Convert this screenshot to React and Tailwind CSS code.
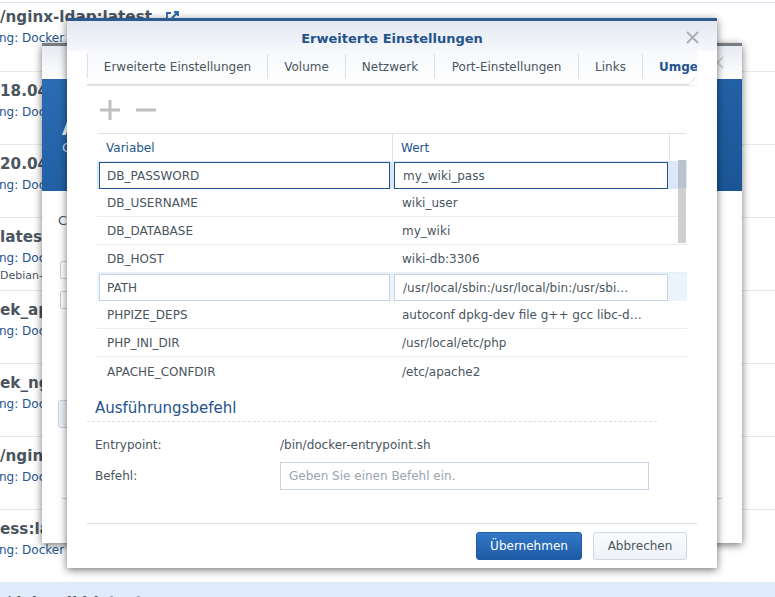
import React from 'react'

const FONT = 'font-["DejaVu_Sans",Verdana,sans-serif]'

const BG_ROWS = [
  { h: 'h-[69px]', pt: 'pt-[4px]', title: '/nginx-ldap:latest', link: true },
  { title: '18.04' },
  { title: '20.04' },
  { title: 'latest', extra: 'Debian-' },
  { title: 'ek_api' },
  { title: 'ek_nginx' },
  { title: '/nginx' },
  { title: 'ess:latest' },
]

const TABS = [
  { label: 'Erweiterte Einstellungen', w: 'w-[180px]' },
  { label: 'Volume', w: 'w-[78px]' },
  { label: 'Netzwerk', w: 'w-[89px]' },
  { label: 'Port-Einstellungen', w: 'w-[144px]' },
  { label: 'Links', w: 'w-[64px]' },
]

const VARS = [
  { k: 'DB_PASSWORD', v: 'my_wiki_pass', state: 'focus' },
  { k: 'DB_USERNAME', v: 'wiki_user' },
  { k: 'DB_DATABASE', v: 'my_wiki' },
  { k: 'DB_HOST', v: 'wiki-db:3306' },
  { k: 'PATH', v: '/usr/local/sbin:/usr/local/bin:/usr/sbin:/usr/bin', state: 'hover' },
  { k: 'PHPIZE_DEPS', v: 'autoconf dpkg-dev file g++ gcc libc-dev make' },
  { k: 'PHP_INI_DIR', v: '/usr/local/etc/php' },
  { k: 'APACHE_CONFDIR', v: '/etc/apache2', last: true },
]

function BgRow({ row }) {
  return (
    <div className={`${row.h || 'h-[73px]'} ${row.pt || 'pt-[9px]'} border-b border-[#e3e9f1]`}>
      <div className="flex items-center gap-2 text-[15.2px] leading-5 font-bold text-[#4a5560] whitespace-nowrap">
        {row.title}
        {row.link && (
          <svg width="13" height="12" viewBox="0 0 13 12" fill="none" stroke="#2b67ad" strokeWidth="1.8" className="ml-[6px]">
            <path d="M5 2H1v9h9V8M6 7l6-6M8 1h4v4" />
          </svg>
        )}
      </div>
      <div className="ml-[-1px] mt-[1px] text-xs leading-5 text-[#24548f] whitespace-nowrap">ng: Docker Hub</div>
      {row.extra && <div className="text-[11px] leading-4 text-[#4a5560]">{row.extra}</div>}
    </div>
  )
}

function VarRow({ row }) {
  const focus = row.state === 'focus'
  const hover = row.state === 'hover'
  const box = focus ? 'border-[#23538e]' : 'border-[#c5d3e2]'
  if (focus || hover) {
    return (
      <div className={`flex h-7 items-center pl-0.5 ${focus ? 'bg-[#dce8f8]' : 'bg-[#ebf3fd]'}`}>
        <div className={`flex h-[27px] w-[291px] shrink-0 items-center border bg-white pl-[7px] pt-px ${box}`}>{row.k}</div>
        <div className={`ml-[4px] flex h-[27px] w-[274px] shrink-0 items-center border bg-white pl-2 pr-[34px] pt-px ${box}`}>
          <span className="truncate">{row.v}</span>
        </div>
      </div>
    )
  }
  return (
    <div className={`flex h-7 items-center pt-px ${row.last ? '' : 'border-b border-[#e9eef4]'}`}>
      <div className="w-[296px] shrink-0 pl-2.5">{row.k}</div>
      <div className="w-[274px] shrink-0 truncate pl-[9px] pr-[22px]">{row.v}</div>
    </div>
  )
}

export default function App() {
  return (
    <div className={`relative h-[597px] w-[775px] overflow-hidden bg-white ${FONT}`}>
      {/* list behind the dialogs */}
      <div className="mt-[2px] border-t border-[#dbe4f0]">
        {BG_ROWS.map((row, i) => <BgRow key={i} row={row} />)}
      </div>
      <div className="h-[15px] bg-[#dfeafa] pl-[5px] pt-[10px] text-[15.2px] font-bold leading-5 text-[#4a5560]">/dokuwiki:latest</div>

      {/* back dialog */}
      <div className="absolute left-[42px] top-[43px] flex h-[500px] w-[700px] flex-col bg-white shadow-[0_2px_8px_rgba(0,0,0,0.55)]">
        <div className="h-[3px] bg-[#767c82]" />
        <div className="relative h-[33px] bg-gradient-to-b from-[#e6ebf1] to-white">
          <span className="absolute right-[18px] top-[10px] text-[#c6cbd1]">
            <svg width="13" height="13" viewBox="0 0 13 13" stroke="currentColor" strokeWidth="1.6"><path d="M1 1l11 11M12 1L1 12" /></svg>
          </span>
        </div>
        <div className="h-[112px] bg-gradient-to-br from-[#2a6cb4] to-[#1b5596] pl-[20px] pt-[40px] text-white">
          <div className="text-[18px] font-bold leading-5">A</div>
          <div className="mt-[1px] text-[13px] leading-4 text-[#cfe0f3]">C</div>
        </div>
        <div className="pl-4 pt-[22px] text-[13px] leading-4 text-[#4a5560]">C</div>
        <div className="ml-[18px] mt-[32px] h-[18px] w-[30px] rounded-[2px] border border-[#c5d3e2]" />
        <div className="ml-[18px] mt-3 h-[18px] w-[30px] rounded-[2px] border border-[#c5d3e2]" />
        <div className="ml-4 mt-[91px] h-7 w-[40px] rounded-[3px] border border-[#c5d3e2] bg-[#eef2f7]" />
        <div className="ml-5 mt-[70px] h-px w-[660px] bg-[#cdd2d8]" />
      </div>

      {/* front dialog */}
      <div className="absolute left-[67px] top-[18px] flex h-[550px] w-[650px] flex-col bg-white text-xs text-[#4a5560] shadow-[0_2px_8px_rgba(0,0,0,0.55)]">
        <div className="h-[3px] bg-[#2c5b94]" />
        <div className="relative h-[30px] bg-gradient-to-b from-[#e2e8f1] to-[#f6f8fb] text-center">
          <span className="text-[13px] font-bold leading-[36px] text-[#24538e]">Erweiterte Einstellungen</span>
          <span className="absolute right-[18px] top-[10px] text-[#a9aeb4]">
            <svg width="13" height="13" viewBox="0 0 13 13" stroke="currentColor" strokeWidth="1.8"><path d="M1 1l11 11M12 1L1 12" /></svg>
          </span>
        </div>

        {/* tabs */}
        <div className="relative ml-5 flex h-[34px] w-[610px] items-center border-b border-[#d8dcdf] bg-gradient-to-b from-[#f6f8fb] to-white pb-[3px] shadow-[0_1px_1px_rgba(0,0,0,0.08)]">
          {TABS.map(t => (
            <div key={t.label} className={`${t.w} flex h-6 shrink-0 items-center justify-center border-l border-[#d9e0e8] pt-[2px] whitespace-nowrap`}>{t.label}</div>
          ))}
          <div className="flex h-6 min-w-0 flex-1 items-center overflow-hidden whitespace-nowrap border-l border-[#d9e0e8] pl-4 pt-[2px] font-bold text-[#24538e]">Umge</div>
          <svg width="10" height="8" viewBox="0 0 10 8" className="absolute bottom-[-1px] right-0">
            <path d="M0 8V7.5h2L9 0.5h1V8z" fill="#fff" />
            <path d="M0 7.5h1.5L8.5 0.5" fill="none" stroke="#d8dcdf" />
          </svg>
        </div>

        {/* toolbar */}
        <div className="ml-[33px] flex h-[48px] items-center gap-[16px] pt-[2px]">
          <svg width="20" height="20" viewBox="0 0 20 20" fill="#bdbfc2"><path d="M8.5 0h3v8.5H20v3h-8.5V20h-3v-8.5H0v-3h8.5z" /></svg>
          <svg width="20" height="20" viewBox="0 0 20 20" fill="#bdbfc2"><path d="M0 8.5h20v3H0z" /></svg>
        </div>

        {/* env table */}
        <div className="relative ml-[30px] w-[590px] border-t border-[#dce3ec]">
          <div className="flex h-[27px] items-center text-[#24538e]">
            <div className="flex h-full w-[295px] items-center pl-[9px]">Variabel</div>
            <div className="flex h-full w-[278px] items-center border-x border-[#dce3ec] pl-2">Wert</div>
          </div>
          {VARS.map(row => <VarRow key={row.k} row={row} />)}
          <div className="absolute right-[1px] top-[26px] h-[83px] w-2 bg-[#cfcfcf]">
            <div className="h-7 bg-[#b9c3d0]" />
          </div>
        </div>

        {/* command section */}
        <div className="ml-5 mt-[13px] w-[570px] border-b border-dashed border-[#d8dee6] pb-[3px] pl-2 text-[15px] leading-5 text-[#24538e]">Ausführungsbefehl</div>
        <div className="mx-[28px] mt-[14px] flex h-[18px] items-center">
          <div className="w-[185px]">Entrypoint:</div>
          <div>/bin/docker-entrypoint.sh</div>
        </div>
        <div className="mx-[28px] mt-[8px] flex items-center">
          <div className="w-[185px]">Befehl:</div>
          <div className="flex h-7 w-[369px] items-center border border-[#c5d3e2] pl-2 text-[#9aa5b1]">Geben Sie einen Befehl ein.</div>
        </div>

        {/* footer */}
        <div className="mx-5 mt-[33px] border-t border-[#dcdfe2]" />
        <div className="mr-[30px] mt-[8px] flex justify-end gap-[11px]">
          <button className="h-7 w-[106px] rounded-[3px] border border-[#1f5ba6] bg-gradient-to-b from-[#3278c6] to-[#1f5ba6] text-white">Übernehmen</button>
          <button className="h-7 w-[94px] rounded-[3px] border border-[#cfd9e4] bg-gradient-to-b from-[#fafbfd] to-[#eef2f7]">Abbrechen</button>
        </div>
      </div>
    </div>
  )
}
